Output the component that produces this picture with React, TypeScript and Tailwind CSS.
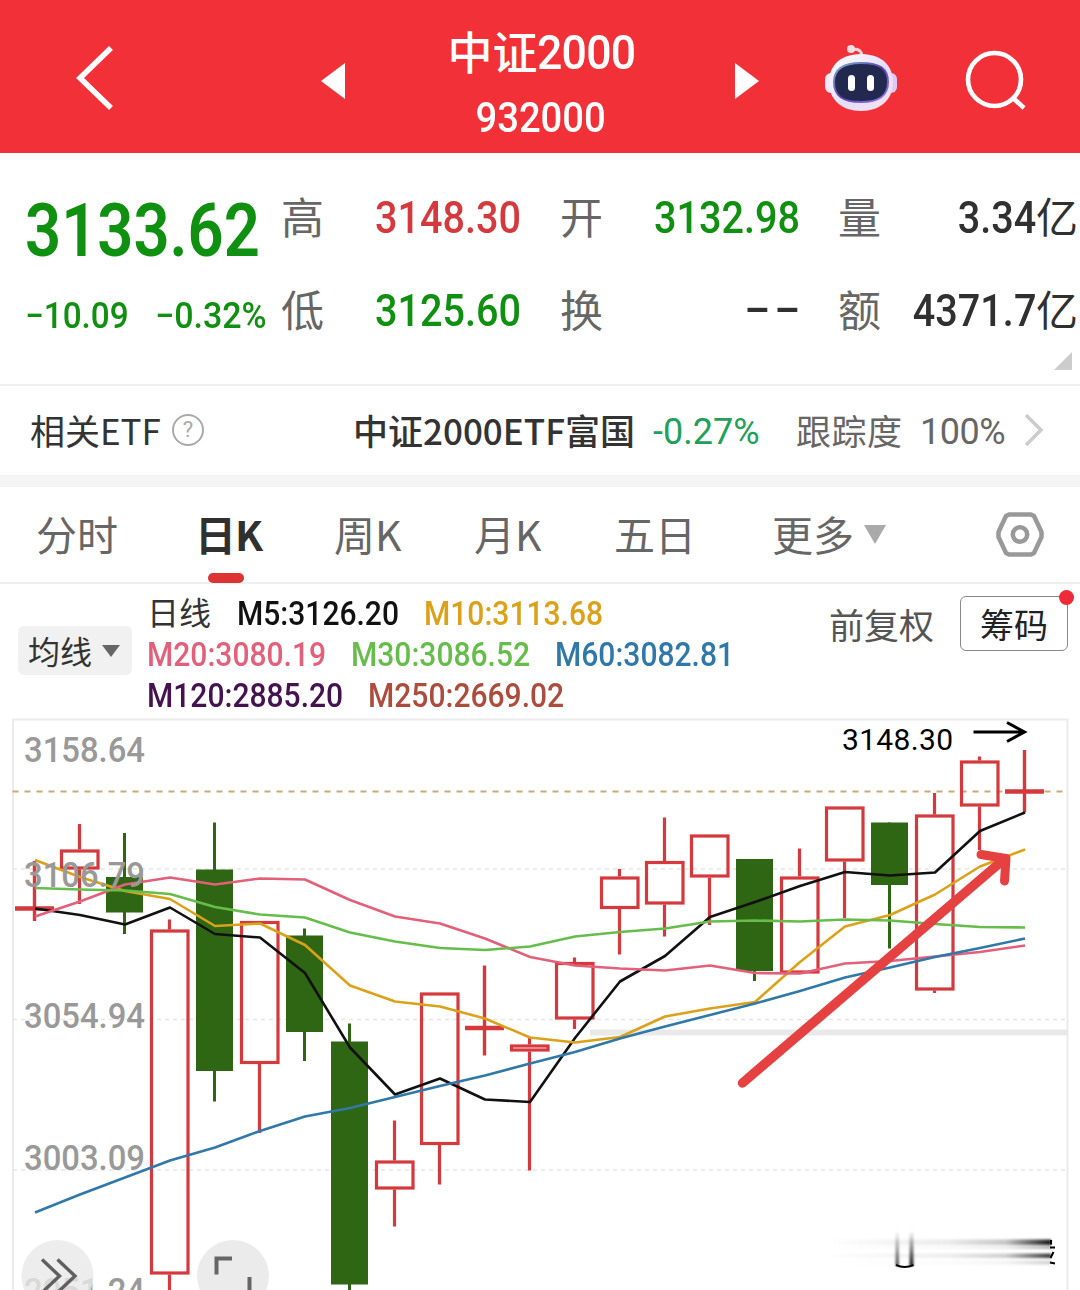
import clsx from 'clsx';

const CJK = "font-['Noto_Sans_CJK_SC',sans-serif]";
const DIGITS = "font-['Roboto','Noto_Sans_CJK_SC',sans-serif]";

const RED = '#d4393d';
const GREEN = '#2f6613';

type Candle = {
  high: number;
  top: number;
  bottom: number;
  low: number;
  type: 'up' | 'down' | 'doji';
};

// Values are y coordinates on the chart canvas
const candles: Candle[] = [
  { high: 861, top: 908.5, bottom: 908.5, low: 921, type: 'doji' },
  { high: 824, top: 849.5, bottom: 869.5, low: 904, type: 'up' },
  { high: 833, top: 877, bottom: 912.5, low: 934, type: 'down' },
  { high: 919.5, top: 929.5, bottom: 1274.5, low: 1290, type: 'up' },
  { high: 822.5, top: 869.5, bottom: 1071, low: 1101.5, type: 'down' },
  { high: 921, top: 921, bottom: 1064, low: 1133, type: 'up' },
  { high: 928.5, top: 935.5, bottom: 1032, low: 1061, type: 'down' },
  { high: 1023.5, top: 1041.5, bottom: 1284.5, low: 1290, type: 'down' },
  { high: 1120.5, top: 1160.5, bottom: 1189.5, low: 1226.5, type: 'up' },
  { high: 992.5, top: 992.5, bottom: 1145, low: 1184.5, type: 'up' },
  { high: 965.5, top: 1028, bottom: 1028, low: 1055.5, type: 'doji' },
  { high: 1037.5, top: 1044.5, bottom: 1051.5, low: 1170.5, type: 'up' },
  { high: 957.5, top: 962, bottom: 1019.5, low: 1029, type: 'up' },
  { high: 869, top: 876.5, bottom: 909, low: 954.5, type: 'up' },
  { high: 817.5, top: 861, bottom: 904.5, low: 936.5, type: 'up' },
  { high: 834.5, top: 834.5, bottom: 877.5, low: 925, type: 'up' },
  { high: 859, top: 859, bottom: 971, low: 981, type: 'down' },
  { high: 848.5, top: 876.5, bottom: 973.5, low: 973.5, type: 'up' },
  { high: 806.5, top: 806.5, bottom: 861.5, low: 918, type: 'up' },
  { high: 822.5, top: 822.5, bottom: 885, low: 948.5, type: 'down' },
  { high: 793, top: 814.5, bottom: 990.5, low: 993, type: 'up' },
  { high: 756.5, top: 760.5, bottom: 806.5, low: 850, type: 'up' },
  { high: 750, top: 791.5, bottom: 791.5, low: 812.5, type: 'doji' },
];

const averages = [
  {
    color: '#111111',
    ys: [908.5, 915, 924.5, 907.5, 934, 937.5, 973, 1047.5, 1094.5, 1078.5, 1099.5, 1102, 1038, 981.5, 956, 917, 902, 886, 872, 875.5, 872.5, 831, 812.5],
  },
  {
    color: '#dba219',
    ys: [860, 877, 891, 899, 926, 923.5, 945, 985.5, 1001.5, 1006.5, 1018.5, 1037.5, 1042.5, 1037, 1016.5, 1008.5, 1002, 962, 926.5, 915, 894.5, 866.5, 849.5],
  },
  {
    color: '#e2607a',
    ys: [916.5, 901.5, 884.5, 877.5, 884.5, 878.5, 879.5, 900, 916.5, 923.5, 938.5, 957, 965.5, 968.5, 970.5, 965.5, 973, 973.5, 963.5, 961, 956.5, 952, 945.5],
  },
  {
    color: '#66bd4b',
    ys: [888, 889.5, 890.5, 894, 907, 914.5, 917.5, 932.5, 941.5, 948, 950, 946.5, 936.5, 932, 928.5, 921.5, 920.5, 921.5, 919.5, 920.5, 924, 927, 927.5],
  },
  {
    color: '#2f78a8',
    ys: [1212.5, 1194.5, 1177.5, 1160.5, 1147.5, 1131, 1116.5, 1108, 1097, 1086, 1075.5, 1063.5, 1052, 1038.5, 1026.5, 1015, 1003.5, 991, 977.5, 967.5, 957, 948, 938.5],
  },
];

const axisLabels = [
  { text: '3158.64', y: 762 },
  { text: '3106.79', y: 887 },
  { text: '3054.94', y: 1028 },
  { text: '3003.09', y: 1170 },
  { text: '2951.24', y: 1303 },
];

const candleX = (i: number) => 34.5 + i * 45;

function RobotIcon() {
  return (
    <svg width="74" height="70" viewBox="824 43 74 70">
      <defs>
        <linearGradient id="shell" x1="0" y1="0" x2="1" y2="1">
          <stop offset="0" stopColor="#ffffff" />
          <stop offset="0.55" stopColor="#e4defb" />
          <stop offset="1" stopColor="#fbdfe8" />
        </linearGradient>
        <linearGradient id="rim" x1="0" y1="0" x2="1" y2="1">
          <stop offset="0" stopColor="#7fb4c8" />
          <stop offset="0.5" stopColor="#5a3fae" />
          <stop offset="1" stopColor="#8f7cf0" />
        </linearGradient>
      </defs>
      <path d="M852 50 C858 48 862 51 862 57" fill="none" stroke="#fbd5dc" strokeWidth="3" />
      <circle cx="851" cy="49" r="4" fill="#fbdde2" />
      <rect x="825" y="73" width="12" height="20" rx="6" fill="#f3e6fa" />
      <rect x="885" y="73" width="12" height="20" rx="6" fill="#dcc8f4" />
      <path d="M861 54 C884 54 893 68 893 82 C893 100 880 111 861 111 C842 111 829 100 829 82 C829 68 838 54 861 54Z" fill="url(#shell)" />
      <path d="M861 63 C880 63 888 69 888 82 C888 96 879 102 861 102 C843 102 834 96 834 82 C834 69 843 63 861 63Z" fill="#23284f" stroke="url(#rim)" strokeWidth="2" />
      <rect x="848" y="75" width="7" height="16" rx="3.5" fill="#fff" />
      <rect x="867" y="75" width="7" height="16" rx="3.5" fill="#fff" />
    </svg>
  );
}

function Header() {
  return (
    <header className="flex h-[152.5px] items-center bg-[#f13037] text-white">
      <svg className="mt-[3px] ml-[74px]" width="42" height="70" viewBox="74 43 42 70" fill="none" stroke="#fff" strokeWidth="5.5">
        <path d="M111 48 L80 78 L111 108" />
      </svg>
      <svg className="mt-[9px] ml-[205px]" width="24" height="36" viewBox="0 1 24 36">
        <path d="M0 19 L24 1 V37Z" fill="#fff" />
      </svg>
      <div className="ml-[78px] flex w-[236px] flex-col items-center whitespace-nowrap">
        <div className={clsx(CJK, 'flex h-[66px] pt-[10px] text-[45px] leading-[62px] font-medium')}>
          <span>中证</span>
          <span className={clsx(DIGITS, 'mr-[-11px] origin-left scale-x-[0.91] pt-0.5 text-[49px] font-medium tracking-[-0.8px]')}>2000</span>
        </div>
        <div className={clsx(DIGITS, 'h-[66px] scale-x-[0.91] pt-[11px] text-[42px] leading-[62px] font-medium')}>932000</div>
      </div>
      <svg className="mt-[9px] ml-[76px]" width="24" height="36" viewBox="0 1 24 36">
        <path d="M24 19 L0 1 V37Z" fill="#fff" />
      </svg>
      <div className="mt-1 ml-[65px]">
        <RobotIcon />
      </div>
      <svg className="mt-2 ml-[66px]" width="64" height="64" viewBox="964 48 64 64" fill="none" stroke="#fff" strokeWidth="4.6">
        <circle cx="994.5" cy="79.5" r="26.5" />
        <path d="M1013 98 L1024 108" />
      </svg>
    </header>
  );
}

function Stat({ label, value, color, unit }: { label: string; value: string; color: string; unit?: string }) {
  return (
    <div className="flex h-[93px] w-[240px] items-center justify-between whitespace-nowrap">
      <span className={clsx(CJK, 'mb-1 w-[44px] shrink-0 text-[43px] leading-[60px] text-[#666]')}>{label}</span>
      <span className={clsx('flex min-w-0 flex-1 items-center justify-end', color)}>
        <span className={clsx(DIGITS, 'origin-right scale-x-[0.88] pt-0.5 text-[45px] leading-[60px] font-medium [word-spacing:-6px]')}>{value}</span>
        {unit && <span className={clsx(CJK, 'mb-1 text-[42px] leading-[60px]')}>{unit}</span>}
      </span>
    </div>
  );
}

function Quote() {
  return (
    <section className="flex h-[231.5px] pt-[18px]">
      <div className={clsx(DIGITS, 'w-[281px] shrink-0 pl-[25px] whitespace-nowrap text-[#109010]')}>
        <div className="h-[119px] origin-left scale-x-[0.855] text-[74px] leading-[120px] font-semibold">3133.62</div>
        <div className="flex h-[52px] items-center text-[36px] leading-[52px] font-medium">
          <span className="w-[130px] origin-left scale-x-[0.925]">−10.09</span>
          <span className="origin-left scale-x-[0.945]">−0.32%</span>
        </div>
      </div>
      <div className="flex flex-col">
        <div className="grid grid-cols-[279px_278px_240px]">
          <Stat label="高" value="3148.30" color="text-[#d4393d]" />
          <Stat label="开" value="3132.98" color="text-[#109010]" />
          <Stat label="量" value="3.34" unit="亿" color="text-[#303030]" />
          <Stat label="低" value="3125.60" color="text-[#109010]" />
          <Stat label="换" value="– –" color="text-[#303030]" />
          <Stat label="额" value="4371.7" unit="亿" color="text-[#303030]" />
        </div>
        <svg className="-mt-[5px] mr-[6px] ml-auto" width="18" height="18">
          <path d="M18 0 V18 H0Z" fill="#ccc" />
        </svg>
      </div>
    </section>
  );
}

function EtfRow() {
  return (
    <section className={clsx(CJK, 'flex h-[91px] items-center border-t-2 border-[#f0f0f0] pl-[30px] text-[35px] leading-[50px] whitespace-nowrap')}>
      <span className="mb-0.5 w-[142px] text-[#333]">相关ETF</span>
      <span className={clsx(DIGITS, 'mb-0.5 flex size-8 items-center justify-center rounded-full border-2 border-[#aaa] text-[22px] text-[#aaa]')}>?</span>
      <span className="mb-0.5 ml-[149px] w-[300px] font-medium text-[#333]">中证2000ETF富国</span>
      <span className={clsx(DIGITS, 'w-[143px] pt-0.5 text-[36px] text-[#22a05b]')}>-0.27%</span>
      <span className="mb-0.5 w-[124px] tracking-[0.5px] text-[#666]">跟踪度</span>
      <span className={clsx(DIGITS, 'w-[105px] pt-0.5 text-[36px] tracking-[-0.5px] text-[#666]')}>100%</span>
      <svg className="mb-0.5" width="18" height="34" fill="none" stroke="#ccc" strokeWidth="3.5">
        <path d="M1 2 L16 17 L1 32" />
      </svg>
    </section>
  );
}

function Tabs() {
  return (
    <nav className={clsx(CJK, 'flex h-[97px] items-center border-b-2 border-[#efefef] pl-[36px] text-[41px] leading-[60px] whitespace-nowrap text-[#666]')}>
      <span className="mb-[3px] w-[159px]">分时</span>
      <span className="relative mb-[3px] w-[139px] font-bold tracking-[-1px] text-[#303030]">
        日K
        <i className="absolute top-[70px] left-[13px] h-[10px] w-[36px] rounded-full bg-[#dc3333]" />
      </span>
      <span className="mb-[3px] w-[140px]">周K</span>
      <span className="mb-[3px] w-[140px]">月K</span>
      <span className="mb-[3px] w-[158px]">五日</span>
      <span className="mb-[3px] w-[92px]">更多</span>
      <svg width="22" height="19">
        <path d="M0 0 H22 L11 19Z" fill="#aaa" />
      </svg>
      <svg className="ml-[108px]" width="52" height="50" viewBox="994 510 52 50" fill="none" stroke="#999" strokeWidth="4.5">
        <path d="M1009 514.5 H1031 L1034 516 L1041.5 532 V537 L1034 553 L1031 554.5 H1009 L1006 553 L998.5 537 V532 L1006 516Z" strokeLinejoin="round" />
        <circle cx="1020" cy="534.5" r="7.2" />
      </svg>
    </nav>
  );
}

function Legend({ text, className }: { text: string; className: string }) {
  return (
    <span className={clsx('shrink-0', className)}>
      <span className="inline-block origin-left scale-x-[0.91]">{text}</span>
    </span>
  );
}

function Indicators() {
  return (
    <section className="flex h-[134px] whitespace-nowrap">
      <div className={clsx(CJK, 'mt-[42px] ml-[18px] flex h-[49px] w-[114px] items-center rounded-md bg-[#f1f1f1] pl-[10px] text-[32px] leading-[49px] text-[#333]')}>
        均线
        <svg className="ml-[10px]" width="18" height="12">
          <path d="M0 0 H18 L9 12Z" fill="#666" />
        </svg>
      </div>
      <div className={clsx(DIGITS, 'ml-[15px] flex w-[682px] flex-col pt-[9px] text-[33px] leading-[41px] font-medium')}>
        <div className="flex">
          <span className="w-[90px] pt-px text-[32px] font-normal text-[#333]">日线</span>
          <Legend text="M5:3126.20" className="w-[187px] text-[#111]" />
          <Legend text="M10:3113.68" className="text-[#dba219]" />
        </div>
        <div className="-mt-px flex">
          <Legend text="M20:3080.19" className="w-[204px] text-[#e2607a]" />
          <Legend text="M30:3086.52" className="w-[204px] text-[#66bd4b]" />
          <Legend text="M60:3082.81" className="text-[#2f78a8]" />
        </div>
        <div className="flex">
          <Legend text="M120:2885.20" className="w-[221px] text-[#43124f]" />
          <Legend text="M250:2669.02" className="text-[#ac4c3c]" />
        </div>
      </div>
      <div className={clsx(CJK, 'w-[105px] pt-[15px] text-[35px] leading-[50px] text-[#555]')}>前复权</div>
      <div className={clsx(CJK, 'relative mt-3 ml-[26px] h-[55px] w-[108px] rounded-md border border-[#888] text-center text-[34px] leading-[54px] text-[#222]')}>
        筹码
        <i className="absolute -top-[7px] -right-[7px] size-[15px] rounded-full bg-[#f02a38]" />
      </div>
    </section>
  );
}

function KLineChart() {
  return (
    <svg className="block" width="1080" height="572" viewBox="0 718 1080 572" fill="none">
      <defs>
        <linearGradient id="fadeX" x1="0" x2="1" y1="0" y2="0">
          <stop offset="0" stopColor="#000" stopOpacity="0" />
          <stop offset="0.55" stopColor="#000" stopOpacity="0.08" />
          <stop offset="0.8" stopColor="#000" stopOpacity="0.22" />
          <stop offset="1" stopColor="#000" stopOpacity="0.9" />
        </linearGradient>
        <linearGradient id="fadeY" x1="0" x2="0" y1="0" y2="1">
          <stop offset="0" stopColor="#000" stopOpacity="0" />
          <stop offset="1" stopColor="#000" stopOpacity="0.9" />
        </linearGradient>
        <filter id="soft" x="-10%" y="-30%" width="120%" height="160%">
          <feGaussianBlur stdDeviation="0.8" />
        </filter>
      </defs>

      {/* Frame and grid */}
      <path d="M13 1290 V719.5 H1067.5 V1290" stroke="#ebebeb" strokeWidth="2" />
      {[869, 1019.5, 1170].map((y) => (
        <path key={y} d={`M13 ${y} H1067`} stroke="#e6e6e6" strokeWidth="1.5" strokeDasharray="4 4" />
      ))}
      <path d="M590 1032.5 H1067" stroke="#e9e9e9" strokeWidth="6" />
      <path d="M12.5 791.5 H1067" stroke="#c9ab76" strokeWidth="1.8" strokeDasharray="6 6" />

      {/* Candles */}
      {candles.map((c, i) => {
        const x = candleX(i);
        if (c.type === 'down') {
          return (
            <g key={i}>
              <path d={`M${x} ${c.high} V${c.low}`} stroke={GREEN} strokeWidth="3" />
              <rect x={x - 18.5} y={c.top} width="37" height={c.bottom - c.top} fill={GREEN} />
            </g>
          );
        }
        if (c.type === 'doji') {
          return (
            <g key={i} stroke={RED}>
              <path d={`M${x} ${c.high} V${c.low}`} strokeWidth="3.4" />
              <path d={`M${x - 19.5} ${c.top} H${x + 19.5}`} strokeWidth="4.4" />
            </g>
          );
        }
        return (
          <g key={i} stroke={RED} strokeWidth="3.2">
            <path d={`M${x} ${c.high} V${c.top} M${x} ${c.bottom} V${c.low}`} />
            <rect x={x - 18} y={c.top + 1.5} width="36.5" height={c.bottom - c.top - 3} />
          </g>
        );
      })}

      {/* Moving averages */}
      {averages.map((line) => (
        <polyline
          key={line.color}
          points={line.ys.map((y, i) => `${candleX(i) + 0.5},${y}`).join(' ')}
          stroke={line.color}
          strokeWidth="2.6"
          strokeLinejoin="round"
        />
      ))}

      {axisLabels.map((label) => (
        <text
          key={label.text}
          x="24"
          y={label.y}
          className={clsx(DIGITS, 'text-[35px] font-medium')}
          fill="#999"
          textLength="121"
          lengthAdjust="spacingAndGlyphs"
        >
          {label.text}
        </text>
      ))}

      {/* Day high marker */}
      <text x="842" y="749.5" className={clsx(DIGITS, 'text-[30px]')} fill="#000" textLength="111">
        3148.30
      </text>
      <path d="M973.5 732 H1024 M1007 722.5 L1024.5 732 L1007 741.5" stroke="#000" strokeWidth="3" />

      {/* Trend arrow */}
      <path d="M742.5 1083 L1002 861" stroke="#e54141" strokeWidth="9.5" strokeLinecap="round" />
      <path d="M981 854.5 L1006 858.5 L1004.5 881" stroke="#e54141" strokeWidth="9" strokeLinecap="round" strokeLinejoin="round" />

      {/* Floating buttons */}
      <circle cx="57.5" cy="1276" r="36" fill="#e9e9e9" fillOpacity="0.8" />
      <path d="M42 1259.5 L59.5 1276 L42 1292.5 M57.5 1259.5 L75 1276 L57.5 1292.5" stroke="#606060" strokeWidth="3.4" />
      <circle cx="233" cy="1276" r="36" fill="#ebebeb" />
      <path d="M216.5 1274.5 V1258.5 H232 M249.5 1277 V1292 H234" stroke="#666" strokeWidth="4" />

      {/* Smudged watermark */}
      <g filter="url(#soft)">
        <rect x="824" y="1239.5" width="227" height="5.5" fill="url(#fadeX)" />
        <rect x="824" y="1246" width="227" height="3" fill="url(#fadeX)" opacity="0.35" />
        <rect x="824" y="1253.5" width="227" height="4.5" fill="url(#fadeX)" opacity="0.85" />
        <rect x="824" y="1260.5" width="227" height="4" fill="url(#fadeX)" opacity="0.2" />
        <rect x="895.5" y="1231" width="3.5" height="35" fill="url(#fadeY)" opacity="0.75" />
        <rect x="909.5" y="1231" width="4" height="35" fill="url(#fadeY)" />
      </g>
      <path d="M896 1265 Q904.5 1269 913.5 1265" stroke="#000" strokeWidth="2" />
      <path d="M1051 1240 V1244.5 M1050 1247.5 H1055 M1053.5 1252 L1050.5 1258 M1050 1262.5 L1055 1263.5" stroke="#000" strokeWidth="2" />
    </svg>
  );
}

export default function App() {
  return (
    <div className="h-[1290px] w-[1080px] overflow-hidden bg-white">
      <Header />
      <Quote />
      <EtfRow />
      <div className="h-3 bg-[#f4f4f4]" />
      <Tabs />
      <Indicators />
      <KLineChart />
    </div>
  );
}
